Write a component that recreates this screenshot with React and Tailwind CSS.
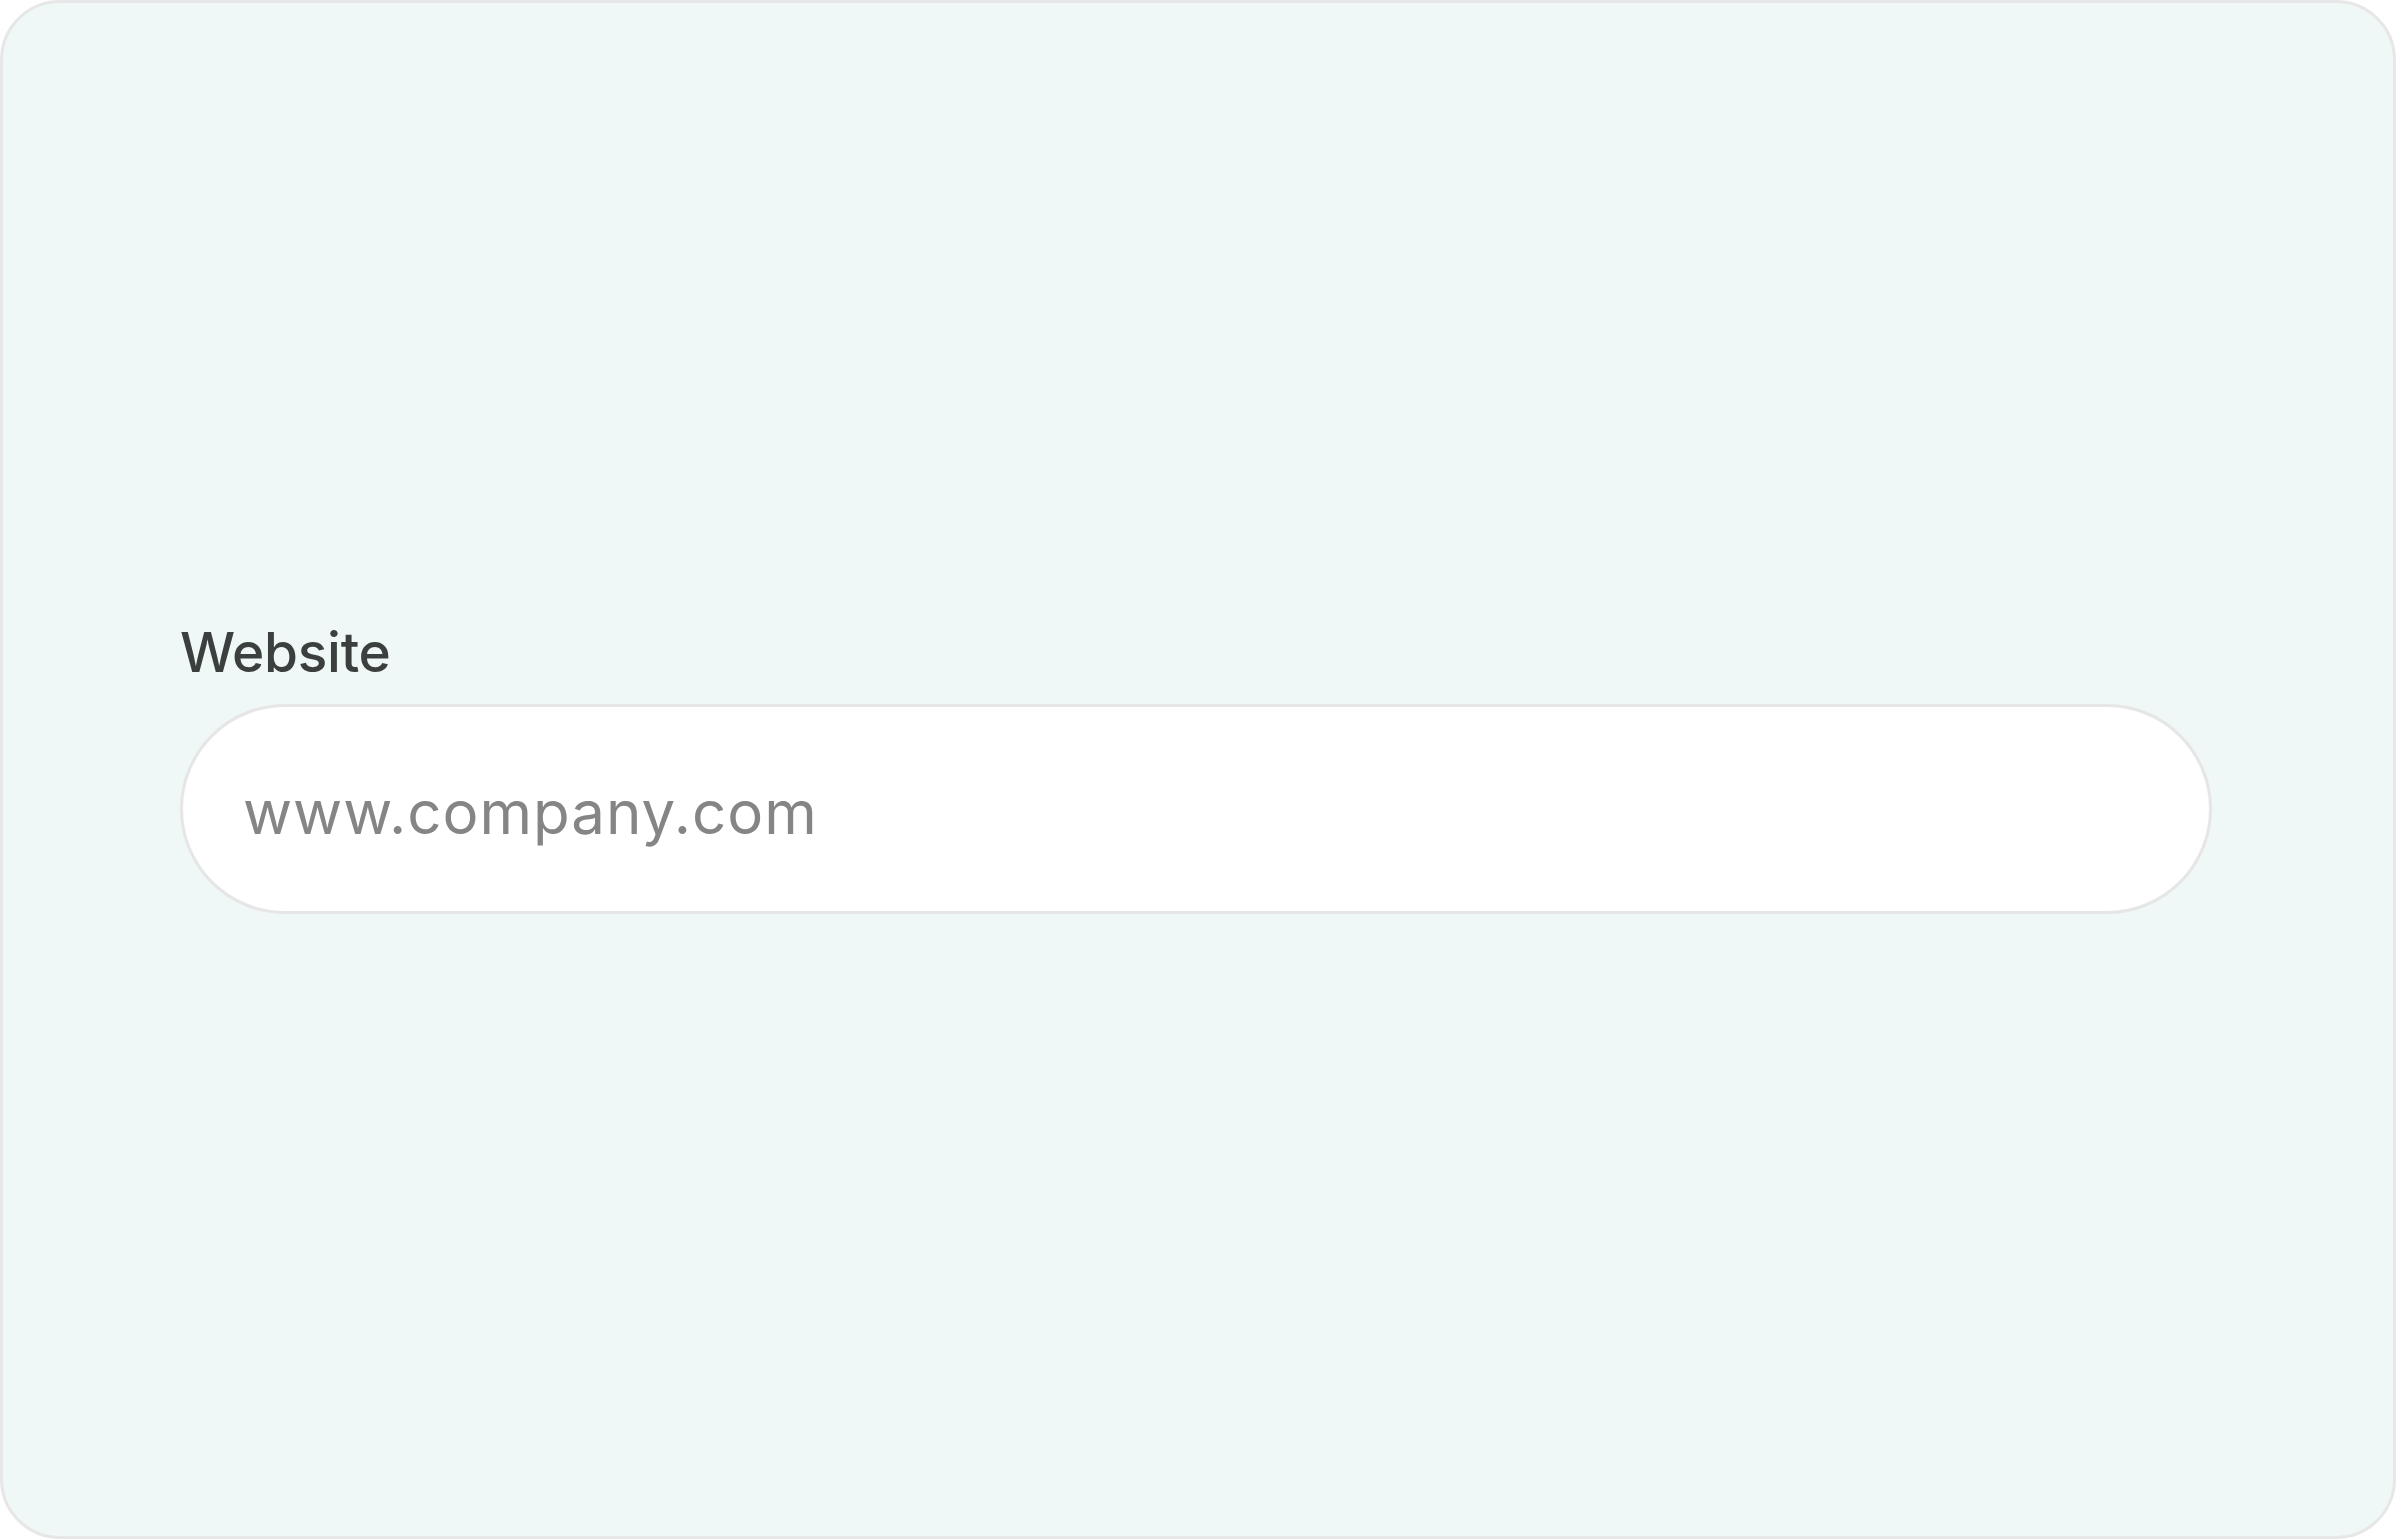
import React from 'react';

export default function App() {
    return (
        <div className="w-[2396px] h-[1539px] bg-white">
            <div className="w-full h-full flex flex-col justify-center px-[177px] pr-[181px] rounded-[60px] border-[3px] border-[#e7e7e7] bg-[#eff8f6]" style={{ fontFamily: 'Inter, "Liberation Sans", sans-serif' }}>
                <label className="text-[55px] font-medium leading-none text-[#3b403f] mb-[24px] tracking-[-0.3px]">
                    Website
                </label>
                <div className="h-[210px] rounded-full border-[3px] border-[#e6e6e6] bg-white flex items-center pl-[60px]">
                    <span className="text-[60px] text-[#858585] leading-none tracking-[1px] mt-[6px]">www.company.com</span>
                </div>
            </div>
        </div>
    );
}
